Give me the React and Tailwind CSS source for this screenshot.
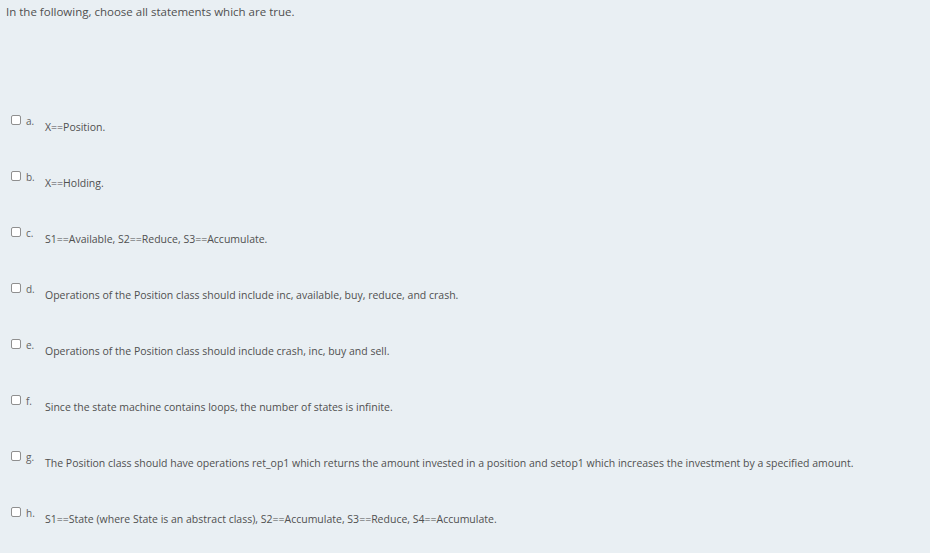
import { useState } from "react";

const options = [
  ["a.", "X==Position."],
  ["b.", "X==Holding."],
  ["c.", "S1==Available, S2==Reduce, S3==Accumulate."],
  ["d.", "Operations of the Position class should include inc, available, buy, reduce, and crash."],
  ["e.", "Operations of the Position class should include crash, inc, buy and sell."],
  ["f.", "Since the state machine contains loops, the number of states is infinite."],
  ["g.", "The Position class should have operations ret_op1 which returns the amount invested in a position and setop1 which increases the investment by a specified amount."],
  ["h.", "S1==State (where State is an abstract class), S2==Accumulate, S3==Reduce, S4==Accumulate."],
];

export default function App() {
  const [checked, setChecked] = useState({});

  return (
    <main
      className="min-h-[553px] w-full bg-[#e9eff3] text-[#505050]"
      style={{ fontFamily: '"Open Sans", "Liberation Sans", sans-serif' }}
    >
      <p className="pl-[6px] pt-[4px] text-[11.5px] leading-[16px] text-[#505050]">
        In the following, choose all statements which are true.
      </p>
      <div className="mt-[88px] flex flex-col">
        {options.map(([letter, text]) => (
          <label key={letter} className="flex h-[56px] cursor-pointer items-start">
            <input
              type="checkbox"
              checked={!!checked[letter]}
              onChange={() => setChecked({ ...checked, [letter]: !checked[letter] })}
              className="peer sr-only"
            />
            <span className="ml-[11px] mt-[7px] h-[10px] w-[10px] shrink-0 rounded-[2px] border border-[#8f8f8f] bg-white" />
            <span className="ml-[5px] mt-[7px] w-[19px] text-[10px] leading-[12px] text-[#5f5f5f]">{letter}</span>
            <span className="mt-[12px] text-[10.5px] leading-[14px] text-[#505050]">{text}</span>
          </label>
        ))}
      </div>
    </main>
  );
}
